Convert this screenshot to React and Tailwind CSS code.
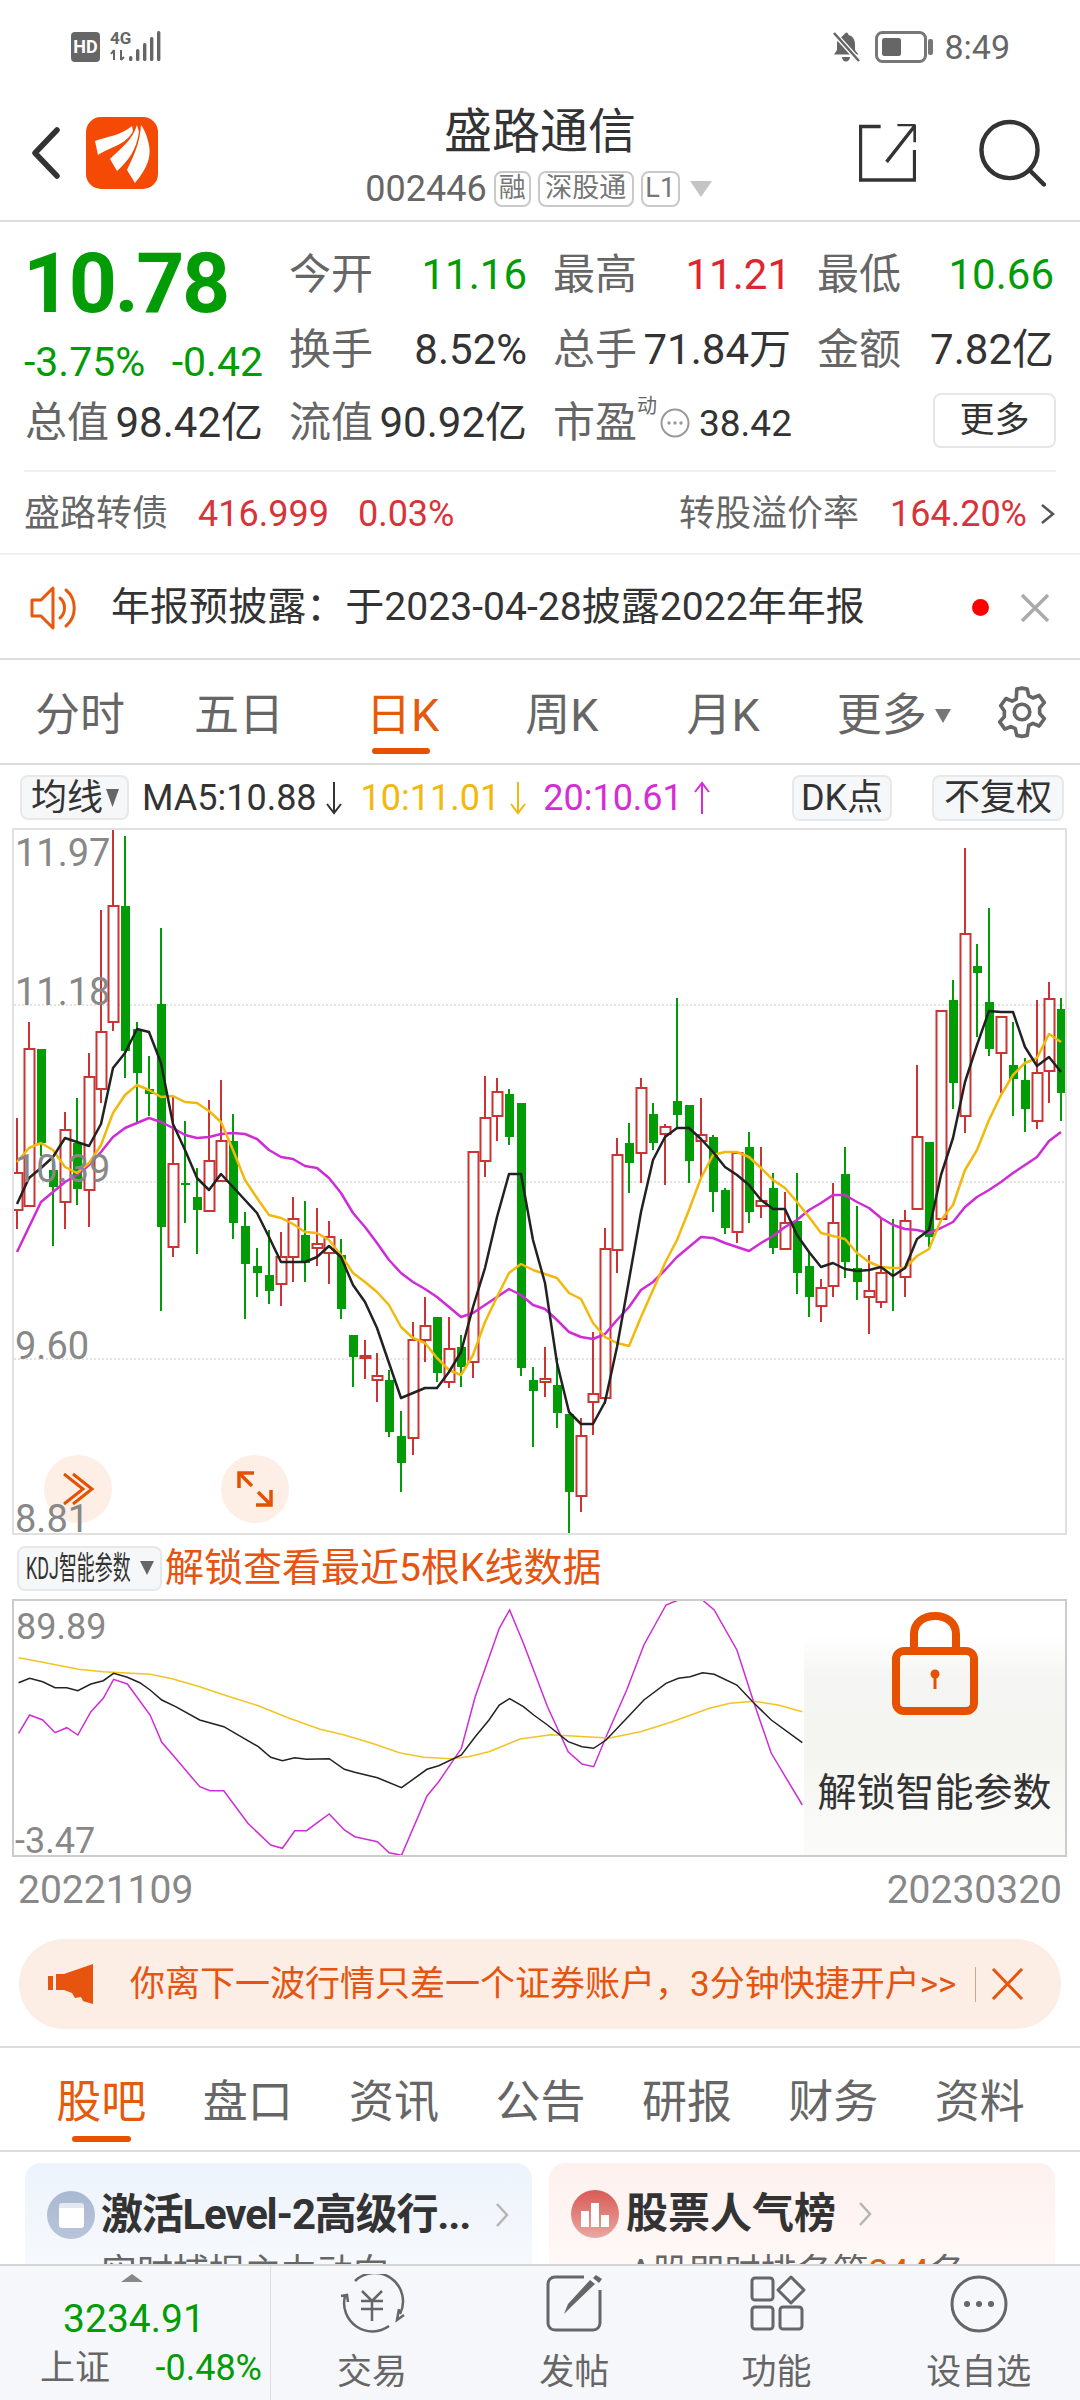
import React from "react";

const C = [
[1118,1173,1210,1229,'r'],[1022,1049,1206,1206,'r'],[1049,1049,1143,1156,'g'],[1160,1170,1187,1246,'g'],[1112,1130,1202,1229,'r'],
[1098,1143,1189,1205,'g'],[1053,1077,1190,1227,'r'],[910,1032,1089,1103,'r'],[828,906,1022,1031,'r'],[836,906,1051,1078,'g'],
[1022,1029,1073,1123,'g'],[1056,1089,1094,1116,'g'],[928,1004,1227,1311,'g'],[1097,1164,1247,1257,'r'],[1121,1183,1185,1223,'g'],
[1168,1197,1210,1254,'g'],[1100,1161,1211,1211,'r'],[1080,1141,1181,1181,'r'],[1114,1141,1223,1239,'g'],[1212,1226,1264,1319,'g'],
[1248,1266,1273,1297,'g'],[1230,1275,1291,1304,'g'],[1232,1257,1284,1306,'r'],[1197,1219,1257,1282,'r'],[1201,1235,1263,1282,'g'],
[1208,1244,1248,1266,'r'],[1221,1237,1253,1284,'r'],[1239,1255,1309,1319,'g'],[1335,1335,1357,1387,'g'],[1340,1356,1358,1379,'r'],
[1353,1376,1380,1402,'r'],[1370,1380,1432,1437,'g'],[1411,1436,1463,1492,'g'],[1322,1340,1438,1455,'r'],[1297,1326,1340,1362,'r'],
[1317,1317,1373,1382,'g'],[1317,1349,1382,1388,'r'],[1335,1347,1367,1387,'g'],[1151,1152,1362,1378,'r'],[1076,1118,1161,1177,'r'],
[1078,1092,1116,1141,'r'],[1089,1094,1137,1145,'g'],[1103,1103,1368,1376,'g'],[1367,1380,1391,1447,'g'],[1347,1379,1382,1397,'r'],
[1358,1385,1413,1428,'g'],[1414,1414,1492,1534,'g'],[1418,1436,1496,1512,'r'],[1332,1394,1402,1435,'r'],[1228,1249,1398,1404,'r'],
[1138,1155,1250,1273,'r'],[1123,1143,1163,1193,'g'],[1078,1088,1153,1183,'r'],[1103,1114,1143,1150,'g'],[1124,1127,1134,1185,'r'],
[998,1101,1115,1128,'g'],[1105,1105,1161,1183,'g'],[1098,1135,1141,1178,'r'],[1135,1137,1192,1212,'g'],[1188,1190,1228,1234,'g'],
[1153,1153,1232,1243,'r'],[1132,1147,1212,1223,'g'],[1147,1201,1206,1218,'r'],[1173,1188,1248,1254,'g'],[1192,1223,1249,1250,'r'],
[1173,1221,1273,1294,'g'],[1253,1266,1297,1317,'g'],[1279,1288,1306,1322,'r'],[1183,1223,1286,1297,'r'],[1147,1174,1262,1278,'g'],
[1206,1268,1282,1300,'g'],[1255,1291,1297,1334,'r'],[1218,1273,1302,1308,'r'],[1219,1267,1268,1311,'g'],[1210,1221,1277,1297,'r'],
[1065,1137,1209,1209,'r'],[1142,1142,1237,1247,'g'],[1011,1011,1219,1219,'r'],[980,1000,1083,1109,'g'],[848,934,1116,1133,'r'],
[944,966,973,1037,'g'],[908,1002,1049,1056,'g'],[1017,1017,1053,1093,'r'],[1022,1065,1079,1116,'g'],[1058,1080,1109,1132,'g'],
[1000,1073,1121,1129,'r'],[982,999,1071,1103,'r'],[998,1009,1093,1121,'g'],
];
const BLACK = [1204,1178,1168,1157,1138,1142,1146,1124,1068,1053,1029,1032,1063,1124,1150,1178,1190,1174,1187,1200,1213,1237,1262,1262,1262,1257,1246,1257,1285,1302,1328,1363,1398,1393,1388,1388,1372,1352,1307,1268,1217,1174,1174,1240,1283,1363,1412,1424,1424,1402,1347,1280,1212,1160,1137,1128,1128,1139,1152,1167,1175,1185,1200,1209,1209,1235,1252,1267,1263,1269,1271,1270,1267,1276,1268,1239,1230,1175,1138,1082,1045,1011,1012,1012,1047,1066,1057,1072];
const YELLOW = [1162,1148,1143,1150,1167,1173,1163,1145,1113,1095,1085,1090,1097,1096,1102,1103,1111,1122,1150,1180,1198,1215,1218,1224,1232,1233,1240,1255,1273,1282,1292,1305,1327,1338,1343,1358,1370,1375,1355,1322,1297,1273,1264,1270,1274,1278,1293,1299,1323,1337,1343,1346,1317,1290,1263,1240,1210,1178,1155,1152,1152,1157,1168,1180,1188,1202,1217,1233,1236,1239,1253,1262,1267,1268,1268,1256,1249,1220,1205,1170,1150,1120,1095,1075,1063,1058,1034,1042];
const MAGENTA = [1252,1227,1202,1192,1182,1175,1165,1152,1137,1128,1123,1118,1122,1128,1135,1138,1137,1134,1133,1134,1139,1150,1157,1159,1166,1168,1178,1193,1213,1227,1243,1260,1273,1282,1289,1297,1307,1317,1313,1305,1297,1289,1295,1305,1309,1320,1332,1337,1339,1334,1320,1307,1290,1282,1270,1257,1247,1237,1238,1243,1247,1251,1243,1236,1227,1220,1210,1203,1195,1195,1202,1208,1218,1225,1229,1230,1233,1228,1222,1207,1197,1190,1182,1173,1165,1157,1141,1132];

const pts = (a) => a.map((y, i) => `${17 + 12 * i},${y}`).join(" ");

const kY = [[27,353],[62,367],[114,388],[150,395],[218,403],[250,416],[290,440],[330,468],[375,497],[420,535],[465,568],[500,585],[540,610],[580,638],[615,652],[655,656],[680,650],[710,635],[755,597],[800,584],[850,590],[885,594],[930,575],[975,546],[1030,505],[1060,490],[1095,484],[1130,495],[1165,515]];
const kK = [[27,428],[43,415],[62,425],[80,443],[97,443],[113,452],[132,432],[150,422],[165,400],[185,412],[203,428],[218,450],[235,480],[255,500],[290,540],[325,560],[375,620],[393,652],[410,662],[428,653],[445,658],[478,656],[500,688],[515,697],[548,713],[583,743],[620,688],[637,677],[670,645],[690,590],[710,540],[725,495],[740,476],[760,500],[775,525],[795,555],[825,605],[845,620],[862,625],[880,600],[910,535],[935,480],[967,430],[985,415],[1002,410],[1020,398],[1037,403],[1070,435],[1095,490],[1120,540],[1165,608]];
const kM = [[27,580],[43,525],[62,540],[80,578],[97,563],[113,585],[132,515],[150,475],[165,418],[185,432],[218,525],[235,607],[255,655],[290,740],[305,752],[325,752],[360,850],[393,915],[410,925],[428,872],[445,872],[478,822],[500,870],[515,890],[548,905],[565,938],[583,946],[620,768],[637,725],[670,625],[690,470],[725,265],[740,210],[760,310],[795,500],[825,635],[845,672],[862,680],[880,590],[910,450],[935,315],[967,195],[985,180],[1020,180],[1037,210],[1070,330],[1095,490],[1120,640],[1165,795]];
const kp = (a) => a.map(([x, y]) => `${(x / 1.452).toFixed(1)},${(1540 + y / 3).toFixed(1)}`).join(" ");

const GREEN = "#029c06";
const RED = "#cc3333";

function Candles() {
  return C.map((c, i) => {
    const x = 17 + 12 * i;
    const [h, t, b, l, k] = c;
    const col = k === "r" ? RED : GREEN;
    return (
      <g key={i}>
        <line x1={x} x2={x} y1={h} y2={t} stroke={col} strokeWidth="2" />
        <line x1={x} x2={x} y1={b} y2={l} stroke={col} strokeWidth="2" />
        {k === "r" ? (
          <rect x={x - 4.5} y={t} width="10" height={Math.max(b - t, 2)} fill="#fff" stroke={col} strokeWidth="2" />
        ) : (
          <rect x={x - 4} y={t} width="9" height={Math.max(b - t, 2)} fill={col} />
        )}
      </g>
    );
  });
}

function Cell({ label, value, color = "text-[#333]" }) {
  return (
    <div className="flex items-center justify-between">
      <span className="text-[#666]">{label}</span>
      <span className={color}>{value}</span>
    </div>
  );
}

function Tag({ children, w }) {
  return (
    <span className={`${w} h-[36px] flex items-center justify-center rounded-[8px] border-2 border-[#c9c9c9] text-[27px] text-[#777] leading-none whitespace-nowrap`}>
      {children}
    </span>
  );
}

export default function App() {
  return (
    <div className="w-[1080px] h-[2400px] overflow-hidden bg-white flex flex-col [font-family:Roboto,'Noto_Sans_CJK_SC',sans-serif]">
      {/* status */}
      <div className="h-[96px] shrink-0 flex items-start justify-between pt-[30px] pl-[71px] pr-[70px]">
        <svg width="96" height="34" viewBox="72 30 96 34" className="block">
          <rect x="72" y="32" width="29" height="30" rx="4" fill="#666" />
          <text x="86.5" y="53" textAnchor="middle" fontSize="18" fontWeight="700" fill="#fff" fontFamily="Roboto">HD</text>
          <text x="111" y="44" fontSize="17" fontWeight="700" fill="#666" fontFamily="Roboto">4G</text>
          <path d="M115 60V50M112 54l3-4M122 50v10M122 60l3-3" stroke="#666" strokeWidth="2" fill="none" />
          <g fill="#666">
            <rect x="130" y="56" width="3.4" height="5" rx="1.5" />
            <rect x="137" y="49" width="3.4" height="12" rx="1.5" />
            <rect x="144" y="43" width="3.4" height="18" rx="1.5" />
            <rect x="151" y="37" width="3.4" height="24" rx="1.5" />
            <rect x="158" y="31" width="3.4" height="30" rx="1.5" />
          </g>
        </svg>
        <div className="flex items-center h-[34px]">
          <svg width="32" height="32" viewBox="0 0 32 32" className="block">
            <path d="M16 1.5c1.5 0 2.5 1 2.5 2.6 4.6 1.2 6.5 5 6.5 9.400v5.500l3.500 4.500H4l3-4.500v-6c0-1 .1-2 .4-2.900zM12 26h8c0 2.500-1.800 4.500-4 4.500s-4-2-4-4.500z" fill="#666" />
            <path d="M3 1l26 29" stroke="#fff" strokeWidth="5" />
            <path d="M4 2l25 28" stroke="#666" strokeWidth="2.500" />
          </svg>
          <svg width="60" height="32" viewBox="0 0 60 32" className="block ml-[13px]">
            <rect x="1.500" y="1.500" width="49" height="29" rx="6" fill="none" stroke="#777" strokeWidth="3" />
            <rect x="7" y="7" width="19" height="18" rx="2.500" fill="#666" />
            <rect x="53" y="8" width="5" height="16" rx="2" fill="#777" />
          </svg>
          <span className="ml-[9px] text-[34px] leading-none text-[#666]">8:49</span>
        </div>
      </div>

      {/* header */}
      <div className="h-[126px] shrink-0 flex border-b-2 border-[#dcdcdc]">
        <div className="w-[221px] shrink-0 flex items-center pl-[31px] pb-[10px]">
          <svg width="29" height="52" viewBox="0 0 29 52" className="block">
            <path d="M26 3L4 26l22 23" fill="none" stroke="#333" strokeWidth="5.500" strokeLinecap="round" strokeLinejoin="round" />
          </svg>
          <svg width="72" height="72" viewBox="0 0 72 72" className="block ml-[26px]">
            <rect width="72" height="72" rx="15" fill="#f54a05" />
            <path d="M46 9C36 18 20 20 9 24l3 14C24 30 40 28 47 14zM51 8C46 24 34 32 24 42l7 12C42 44 50 34 53 15zM55 8C54 26 48 38 41 53l8 13C57 56 66 44 63 28 61 18 58 12 55 8z" fill="#fff" />
          </svg>
        </div>
        <div className="flex-1 flex flex-col items-center pt-[5px]">
          <div className="h-[62px] flex items-center text-[48px] leading-none text-[#333]">盛路通信</div>
          <div className="mt-[7px] flex items-center h-[37px] gap-[7px] -ml-[3px]">
            <span className="text-[36px] text-[#666] leading-none">002446</span>
            <Tag w="w-[37px]">融</Tag>
            <Tag w="w-[96px]">深股通</Tag>
            <Tag w="w-[39px]">L1</Tag>
            <svg width="22" height="16" viewBox="0 0 22 16" className="block ml-[3px]"><path d="M0 0h22L11 16z" fill="#c4c4c4" /></svg>
          </div>
        </div>
        <div className="w-[221px] shrink-0 flex items-center justify-end pr-[34px] pb-[10px] gap-[63px]">
          <svg width="58" height="58" viewBox="0 0 58 58" className="block">
            <path d="M22 2H1.500v54.500h55V26M57 0v18M57 0H39M57 1L28 38" fill="none" stroke="#333" strokeWidth="3.500" />
          </svg>
          <svg width="68" height="68" viewBox="0 0 68 68" className="block">
            <circle cx="31" cy="31" r="28.500" fill="none" stroke="#333" strokeWidth="4.500" />
            <path d="M52 52l14 14" stroke="#333" strokeWidth="4.500" strokeLinecap="round" />
          </svg>
        </div>
      </div>

      {/* quote */}
      <div className="shrink-0 h-[250px] flex flex-col pt-[15px] text-[42px] leading-none mx-[24px] border-b-2 border-[#f0f0f0]">
        <div className="flex">
          <div className="w-[265px] shrink-0 flex flex-col">
            <div className="h-[94px] flex items-center text-[84px] font-bold text-[#029c06] -ml-[1px] tracking-[-2.5px]">10.78</div>
            <div className="h-[56px] pt-[6px] flex items-center justify-between pr-[26px] text-[41px] text-[#029c06]">
              <span>-3.75%</span>
              <span>-0.42</span>
            </div>
          </div>
          <div className="flex-1 grid grid-cols-[238px_238px_237px] gap-x-[26px] grid-rows-[75px_75px] items-center">
            <Cell label="今开" value="11.16" color="text-[#029c06]" />
            <Cell label="最高" value="11.21" color="text-[#e0262c]" />
            <Cell label="最低" value="10.66" color="text-[#029c06]" />
            <Cell label="换手" value="8.52%" />
            <Cell label="总手" value="71.84万" />
            <Cell label="金额" value="7.82亿" />
          </div>
        </div>
        <div className="flex items-center h-[72px]">
          <div className="w-[239px] pl-[1px] flex justify-between mr-[26px]">
            <span className="text-[#666]">总值</span><span className="text-[#333]">98.42亿</span>
          </div>
          <div className="w-[238px] flex justify-between mr-[26px]">
            <span className="text-[#666]">流值</span><span className="text-[#333]">90.92亿</span>
          </div>
          <div className="flex items-center">
            <span className="text-[#666]">市盈</span>
            <span className="text-[20px] text-[#666] self-start -mt-[6px]">动</span>
            <svg width="30" height="30" viewBox="0 0 30 30" className="block ml-[3px]">
              <circle cx="15" cy="15" r="13.500" fill="none" stroke="#999" strokeWidth="2" />
              <circle cx="9" cy="15" r="1.700" fill="#999" /><circle cx="15" cy="15" r="1.700" fill="#999" /><circle cx="21" cy="15" r="1.700" fill="#999" />
            </svg>
            <span className="ml-[9px] text-[#333] text-[37px]">38.42</span>
          </div>
          <div className="ml-auto mb-[6px] w-[123px] h-[55px] rounded-[8px] border-2 border-[#e6e6e6] flex items-center justify-center text-[35px] text-[#333]">更多</div>
        </div>
      </div>

      {/* bond */}
      <div className="shrink-0 h-[83px] border-b-2 border-[#f0f0f0] flex items-center pl-[24px] pr-[24px] pt-[2px] text-[36px] leading-none">
        <span className="text-[#666]">盛路转债</span>
        <span className="ml-[30px] text-[#d9333a]">416.999</span>
        <span className="ml-[29px] text-[#d9333a]">0.03%</span>
        <span className="ml-auto text-[#666]">转股溢价率</span>
        <span className="ml-[31px] text-[#d9333a]">164.20%</span>
        <svg width="16" height="24" viewBox="0 0 16 24" className="block ml-[13px]"><path d="M2 3l11 9-11 9" fill="none" stroke="#555" strokeWidth="2.500" /></svg>
      </div>

      {/* notice */}
      <div className="shrink-0 h-[105px] border-b-2 border-[#dcdcdc] flex items-center pl-[30px] pr-[30px] pt-[2px]">
        <svg width="50" height="44" viewBox="0 0 50 44" className="block">
          <path d="M2 14h9L23 2v40L11 30H2z" fill="none" stroke="#e8590c" strokeWidth="3" strokeLinejoin="round" />
          <path d="M30 12c6 5 6 15 0 20M36 4c11 9 11 27 0 36" fill="none" stroke="#e8590c" strokeWidth="3" strokeLinecap="round" />
        </svg>
        <span className="ml-[31px] text-[39px] leading-none text-[#333] tracking-[0.05px]">年报预披露：于2023-04-28披露2022年年报</span>
        <span className="ml-auto w-[17px] h-[17px] rounded-full bg-[#ff0000]" />
        <svg width="30" height="30" viewBox="0 0 30 30" className="block ml-[31px]"><path d="M2 2l26 26M28 2L2 28" stroke="#aaa" strokeWidth="3.500" /></svg>
      </div>

      {/* period tabs */}
      <div className="shrink-0 h-[105px] border-b-2 border-[#dcdcdc] flex items-center pl-[35px] text-[45px] leading-none text-[#666] pt-[8px]">
        <span>分时</span>
        <span className="ml-[69px]">五日</span>
        <span className="relative ml-[82px] text-[#e65a0c]">
          日K
          <span className="absolute left-[6px] top-[55px] w-[58px] h-[6px] rounded-full bg-[#e65100]" />
        </span>
        <span className="ml-[86px]">周K</span>
        <span className="ml-[88px]">月K</span>
        <span className="ml-[77px]">更多</span>
        <svg width="16" height="14" viewBox="0 0 16 14" className="block ml-[8px]"><path d="M0 0h16L8 14z" fill="#777" /></svg>
        <svg width="54" height="54" viewBox="0 0 52 52" className="block ml-[44px] -mt-[8px]">
          <path d="M26 3l5 1 1.500 6.500 4 2 6-2.500 5 7-4.500 5v5.500l4.500 5-5 7-6-2.500-4 2L31 48.500l-5 1-5-1-1.500-6.500-4-2-6 2.500-5-7 4.500-5V25L5.500 20l5-7 6 2.500 4-2L21 4z" fill="none" stroke="#666" strokeWidth="3.500" strokeLinejoin="round" />
          <circle cx="26" cy="26" r="7.500" fill="none" stroke="#666" strokeWidth="3.500" />
        </svg>
      </div>

      {/* MA row */}
      <div className="shrink-0 h-[63px] flex items-center pl-[20px] pr-[16px] text-[36px] leading-none pt-[2px]">
        <div className="w-[109px] h-[45px] rounded-[8px] border-2 border-[#e8e8e8] bg-[#f6f7f8] flex items-center pl-[9px] text-[#333]">
          均线
          <svg width="13" height="18" viewBox="0 0 13 18" className="block ml-[3px]"><path d="M0 0h13L6.500 18z" fill="#666" /></svg>
        </div>
        <span className="ml-[13px] text-[#333]">MA5:10.88</span>
        <svg width="18" height="34" viewBox="0 0 18 34" className="block ml-[8px]"><path d="M9 1v31M2 23l7 9 7-9" fill="none" stroke="#333" strokeWidth="2" /></svg>
        <span className="ml-[18px] text-[#f2b90c]">10:11.01</span>
        <svg width="18" height="34" viewBox="0 0 18 34" className="block ml-[9px]"><path d="M9 1v31M2 23l7 9 7-9" fill="none" stroke="#f2b90c" strokeWidth="2" /></svg>
        <span className="ml-[16px] text-[#d62cd6]">20:10.61</span>
        <svg width="18" height="34" viewBox="0 0 18 34" className="block ml-[10px]"><path d="M9 33V2M2 11l7-9 7 9" fill="none" stroke="#d62cd6" strokeWidth="2" /></svg>
        <div className="ml-auto w-[100px] h-[46px] rounded-[8px] border-2 border-[#e8e8e8] bg-[#f6f7f8] flex items-center justify-center text-[#333]">DK点</div>
        <div className="ml-[40px] w-[132px] h-[46px] rounded-[8px] border-2 border-[#e8e8e8] bg-[#f6f7f8] flex items-center justify-center text-[#333]">不复权</div>
      </div>

      {/* main chart */}
      <div className="shrink-0 relative ml-[12px] w-[1055px] h-[707px] border-2 border-[#e0e0e0]">
        <svg viewBox="14 830 1051 703" className="block w-full h-full">
          {[1005, 1182, 1359].map((y) => (
            <line key={y} x1="14" x2="1065" y1={y} y2={y} stroke="#e4e4e4" strokeWidth="2" strokeDasharray="2 2" />
          ))}
          <Candles />
          <polyline points={pts(MAGENTA)} fill="none" stroke="#d02cd6" strokeWidth="2.500" strokeLinejoin="round" />
          <polyline points={pts(YELLOW)} fill="none" stroke="#f2b90c" strokeWidth="2.500" strokeLinejoin="round" />
          <polyline points={pts(BLACK)} fill="none" stroke="#222" strokeWidth="2.500" strokeLinejoin="round" />
        </svg>
        <div className="absolute left-[30px] top-[625px] w-[68px] h-[68px] rounded-full bg-[#fdeee6] flex items-center justify-center">
          <svg width="34" height="34" viewBox="0 0 34 34" className="block"><path d="M3 2l19 15L3 32M12 2l19 15-19 15" fill="none" stroke="#e65100" strokeWidth="3" /></svg>
        </div>
        <div className="absolute left-[207px] top-[625px] w-[68px] h-[68px] rounded-full bg-[#fdeee6] flex items-center justify-center">
          <svg width="36" height="36" viewBox="0 0 36 36" className="block"><path d="M17 2H2v15M2 2l13 13M21 21l13 13M34 19v15H19" fill="none" stroke="#e65100" strokeWidth="3.500" /></svg>
        </div>
        <div className="absolute inset-0 text-[38px] leading-none text-[#888]">
          <span className="absolute left-[1px] top-[4px]">11.97</span>
          <span className="absolute left-[1px] top-[143px]">11.18</span>
          <span className="absolute left-[1px] top-[320px]">10.39</span>
          <span className="absolute left-[1px] top-[497px]">9.60</span>
          <span className="absolute left-[1px] top-[670px]">8.81</span>
        </div>
      </div>

      {/* KDJ row */}
      <div className="shrink-0 h-[64px] flex items-center pl-[17px] pt-[2px]">
        <div className="w-[145px] h-[45px] rounded-[8px] border-2 border-[#e8e8e8] bg-[#f6f7f8] flex items-center relative overflow-hidden">
          <span className="absolute left-[7px] text-[32px] leading-none text-[#333] origin-left scale-x-[0.56] whitespace-nowrap">KDJ智能参数</span>
          <svg width="14" height="14" viewBox="0 0 14 14" className="absolute left-[121px] block"><path d="M0 0h14L7 14z" fill="#666" /></svg>
        </div>
        <span className="ml-[3px] text-[39px] leading-none text-[#e6540f]">解锁查看最近5根K线数据</span>
      </div>

      {/* KDJ panel */}
      <div className="shrink-0 relative ml-[12px] w-[1055px] h-[258px] border-2 border-[#cccccc]">
        <svg viewBox="14 1601 1051 254" className="block w-full h-full">
          <polyline points={kp(kM)} fill="none" stroke="#d02cd6" strokeWidth="1.500" />
          <polyline points={kp(kY)} fill="none" stroke="#f2c422" strokeWidth="1.500" />
          <polyline points={kp(kK)} fill="none" stroke="#222" strokeWidth="1.500" />
        </svg>
        <span className="absolute left-[2px] top-[8px] text-[36px] leading-none text-[#888]">89.89</span>
        <span className="absolute left-[1px] top-[222px] text-[36px] leading-none text-[#888]">-3.47</span>
        <div className="absolute right-0 top-0 bottom-0 w-[261px] bg-[linear-gradient(180deg,#ffffff_0%,#ffffff_14%,#f5f5f3_30%,#f4f4f0_60%,#f8f8f6_78%,#fbfbfa_100%)] flex flex-col items-center">
          <svg width="86" height="103" viewBox="0 0 86 103" className="block mt-[11px]">
            <path d="M22 40V22C22 11 31 4 43 4s21 7 21 18v18" fill="none" stroke="#e65100" strokeWidth="8" />
            <rect x="4" y="39" width="78" height="60" rx="8" fill="none" stroke="#e65100" strokeWidth="8" />
            <circle cx="43" cy="62" r="4.500" fill="#e65100" />
            <rect x="41.500" y="62" width="3" height="15" fill="#e65100" />
          </svg>
          <span className="mt-[59px] text-[39px] leading-none text-[#333]">解锁智能参数</span>
        </div>
      </div>

      {/* dates */}
      <div className="shrink-0 h-[66px] flex items-center justify-between pl-[18px] pr-[18px] text-[39px] leading-none text-[#888]">
        <span>20221109</span>
        <span>20230320</span>
      </div>

      {/* banner */}
      <div className="shrink-0 ml-[19px] mt-[16px] w-[1042px] h-[90px] rounded-full bg-[#fcede5] flex items-center pl-[29px] text-[#e6540f]">
        <svg width="46" height="40" viewBox="0 0 46 40" className="block">
          <path d="M0 12h5v14H0zM8 10h8L45 0v40l-10-3-2-4-6 1-3-5-8-3H8z" fill="#e6540f" />
        </svg>
        <span className="ml-[36px] text-[35px] leading-none whitespace-nowrap">你离下一波行情只差一个证券账户，3分钟快捷开户&gt;&gt;</span>
        <span className="ml-[19px] w-[1px] h-[35px] bg-[#c9a898]" />
        <svg width="33" height="32" viewBox="0 0 33 32" className="block ml-[15px]"><path d="M2 1l29 30M31 1L2 31" stroke="#e6540f" strokeWidth="3" /></svg>
      </div>

      {/* section tabs */}
      <div className="shrink-0 mt-[17px] h-[106px] border-y-2 border-[#dcdcdc] grid grid-cols-7 pl-[28px] pr-[27px] text-[45px] leading-none text-[#666]">
        {["股吧", "盘口", "资讯", "公告", "研报", "财务", "资料"].map((t, i) => (
          <div key={t} className={`relative flex items-center justify-center pt-[6px] ${i === 0 ? "text-[#e65a0c]" : ""}`}>
            {t}
            {i === 0 && <span className="absolute left-[44px] bottom-[8px] w-[59px] h-[6px] rounded-full bg-[#e65100]" />}
          </div>
        ))}
      </div>

      {/* cards */}
      <div className="flex-1 min-h-0 overflow-hidden flex gap-[17px] pl-[25px] pt-[11px]">
        <div className="w-[507px] h-[200px] rounded-t-[16px] bg-[linear-gradient(180deg,#edf3fb_0%,#ffffff_100%)] shrink-0 pl-[22px]">
          <div className="flex items-center mt-[28px]">
            <div className="w-[48px] h-[48px] rounded-full bg-[linear-gradient(180deg,#a9b9d2,#b9c4d8)] flex items-center justify-center shrink-0">
              <div className="w-[25px] h-[25px] rounded-[3px] bg-white border-t-[5px] border-[#e4e9f1]" />
            </div>
            <span className="ml-[6px] text-[42px] leading-none font-bold text-[#333] whitespace-nowrap tracking-[-1.2px]">激活Level-2高级行...</span>
            <svg width="14" height="26" viewBox="0 0 14 26" className="block ml-[25px]"><path d="M2 2l10 11L2 24" fill="none" stroke="#b5b5b5" strokeWidth="2.500" /></svg>
          </div>
          <div className="mt-[16px] ml-[54px] text-[36px] leading-none text-[#666] whitespace-nowrap">实时捕捉主力动向</div>
        </div>
        <div className="w-[506px] h-[200px] rounded-t-[16px] bg-[linear-gradient(180deg,#fdf1ef_0%,#ffffff_100%)] shrink-0 pl-[22px]">
          <div className="flex items-center mt-[27px]">
            <div className="w-[48px] h-[48px] rounded-full bg-[linear-gradient(180deg,#d85a55,#eba7a2)] flex items-center justify-center shrink-0">
              <svg width="30" height="26" viewBox="0 0 30 26" className="block"><path d="M1 10h8v16H1zM11 2h8v24h-8zM21 14h8v12h-8z" fill="#fff" /></svg>
            </div>
            <span className="ml-[7px] text-[42px] leading-none font-bold text-[#333] whitespace-nowrap">股票人气榜</span>
            <svg width="14" height="26" viewBox="0 0 14 26" className="block ml-[22px]"><path d="M2 2l10 11L2 24" fill="none" stroke="#b5b5b5" strokeWidth="2.500" /></svg>
          </div>
          <div className="mt-[17px] ml-[58px] text-[36px] leading-none text-[#666] whitespace-nowrap">A股即时排名第<span className="text-[#e65a0c]">344</span>名</div>
        </div>
      </div>

      {/* footer */}
      <div className="shrink-0 h-[136px] border-t-2 border-[#d4d4d4] bg-[#f6f7fa] flex">
        <div className="w-[271px] shrink-0 border-r border-[#dddddd] flex flex-col items-center relative">
          <svg width="22" height="8" viewBox="0 0 22 8" className="block mt-[8px] ml-[-6px]"><path d="M11 0l11 8H0z" fill="#888" /></svg>
          <span className="mt-[18px] text-[39px] leading-none text-[#029c06] ml-[-2px]">3234.91</span>
          <div className="mt-[11px] w-full flex items-center justify-between pl-[40px] pr-[8px]">
            <span className="text-[35px] leading-none text-[#666]">上证</span>
            <span className="text-[36px] leading-none text-[#029c06]">-0.48%</span>
          </div>
        </div>
        <div className="flex-1 grid grid-cols-4 text-[35px] leading-none text-[#666]">
          <div className="flex flex-col items-center">
            <svg width="68" height="60" viewBox="-4 0 68 60" className="block mt-[8px]">
              <path d="M13 7A28.300 28.300 0 0 1 58 40M57 35l-2 11 7-5M47 52A28.300 28.300 0 0 1 3 22M-1 22l6-1 1 7" fill="none" stroke="#666" strokeWidth="2.500" />
              <path d="M20 17l10 10 10-10M19 27h22M19 35h22M30 27v20" fill="none" stroke="#666" strokeWidth="2.500" />
            </svg>
            <span className="mt-[21px]">交易</span>
          </div>
          <div className="flex flex-col items-center">
            <svg width="60" height="60" viewBox="0 0 60 60" className="block mt-[8px]">
              <path d="M40 3H11C7 3 4 6 4 10v39c0 4 3 7 7 7h38c4 0 7-3 7-7V16" fill="none" stroke="#666" strokeWidth="3" />
              <path d="M20 40l4-10 22-24 5 4-24 23z" fill="#666" />
              <path d="M49 4l3-3 6 4-3 4z" fill="#666" />
            </svg>
            <span className="mt-[21px]">发帖</span>
          </div>
          <div className="flex flex-col items-center">
            <svg width="60" height="60" viewBox="0 0 60 60" className="block mt-[8px]">
              <g fill="none" stroke="#666" strokeWidth="3">
                <rect x="5" y="4" width="21" height="22" rx="3" />
                <rect x="5" y="33" width="21" height="22" rx="3" />
                <rect x="33" y="33" width="22" height="22" rx="3" />
                <path d="M44 3l13 13-13 13-13-13z" strokeLinejoin="round" />
              </g>
            </svg>
            <span className="mt-[21px]">功能</span>
          </div>
          <div className="flex flex-col items-center">
            <svg width="60" height="60" viewBox="0 0 60 60" className="block mt-[8px]">
              <circle cx="30" cy="30" r="27" fill="none" stroke="#666" strokeWidth="3" />
              <circle cx="18" cy="30" r="3" fill="#666" /><circle cx="30" cy="30" r="3" fill="#666" /><circle cx="42" cy="30" r="3" fill="#666" />
            </svg>
            <span className="mt-[21px]">设自选</span>
          </div>
        </div>
      </div>
    </div>
  );
}
